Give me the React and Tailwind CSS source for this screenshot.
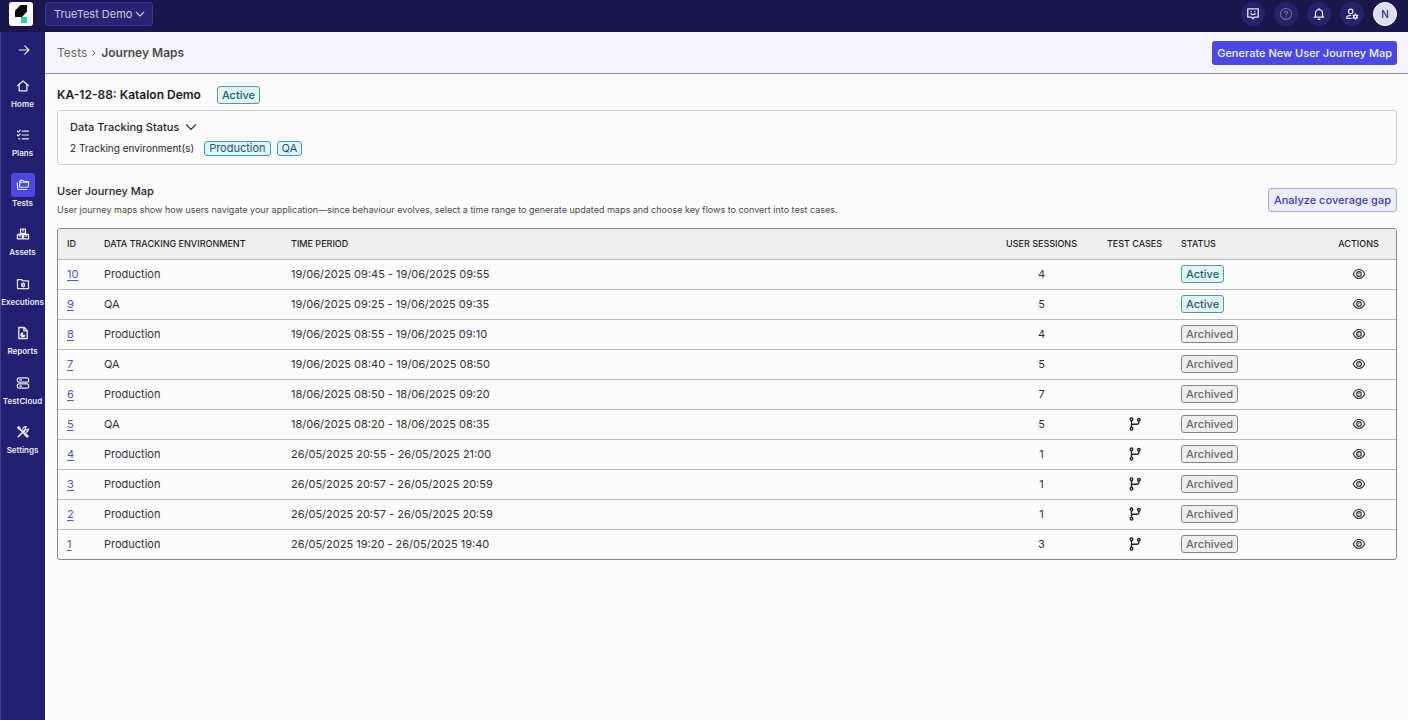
import React from "react";

const Svg = ({ size = "size-[14px]", children, sw = 1.5 }) => (
  <svg viewBox="0 0 16 16" className={size} fill="none" stroke="currentColor" strokeWidth={sw} strokeLinecap="round" strokeLinejoin="round" aria-hidden="true">
    {children}
  </svg>
);

const HomeIcon = () => (
  <Svg sw={1.5}>
    <path d="M2 7.500 8 2.300l6 5.200M3.600 6.400v7.200h8.800V6.400" />
  </Svg>
);
const PlansIcon = () => (
  <Svg sw={1.4}>
    <path d="M7 3.600h7.200M7 8h7.200M7 12.400h7.200M1.600 3.600l1.100 1.100 2-2.300M1.600 8l1.100 1.100 2-2.300M3 12.400h1.400" />
  </Svg>
);
const TestsIcon = () => (
  <Svg sw={1.3}>
    <path d="M4 9.300 4.500 3.600c0-.5.400-.9.900-.9h2.400l1.300 1.400h4.400c.5 0 .9.400.9.900l-.4 4.700c0 .5-.4.900-.9.900H4.900c-.5 0-.9-.4-.9-.9zM4.400 6.200l.2-.7c.1-.4.400-.6.800-.6h8.800" />
    <path d="M1.500 5.600 1.900 12c0 .7.600 1.200 1.300 1.200h9" />
  </Svg>
);
const AssetsIcon = () => (
  <Svg sw={1.5}>
    <path d="M5.200 2.400h5.600v5H5.200zM1.700 8.600h5.600v5H1.700zM8.700 8.600h5.600v5H8.700zM8 2.400v2.200M4.500 8.600v2.200M11.500 8.600v2.200" />
  </Svg>
);
const ExecutionsIcon = () => (
  <Svg sw={1.4}>
    <path d="M1.700 2.900h4.600l1.500 1.600h6.500v8.900H1.700z" />
    <circle cx="8.200" cy="9" r="1.500" />
    <path d="M8.200 6.700v.6M8.200 10.700v.6M6.200 7.800l.5.300M9.700 9.900l.5.300M6.200 10.200l.5-.3M9.700 8.100l.5-.3" />
  </Svg>
);
const ReportsIcon = () => (
  <Svg sw={1.5}>
    <path d="M3.200 1.700h6.100l3.500 3.500v9.100H3.200zM9 1.700v3.800h3.800" />
    <path d="M7.800 7.500v2.700h2.700A2.700 2.700 0 1 1 7.800 7.500z" fill="currentColor" strokeWidth="0.500" />
  </Svg>
);
const CloudIcon = () => (
  <Svg sw={1.4}>
    <rect x="1.500" y="2.200" width="13" height="4.700" rx="1.800" />
    <rect x="1.500" y="9.100" width="13" height="4.700" rx="1.800" />
    <path d="M4.200 4.500h2.200M4.200 11.500h2.200" />
  </Svg>
);
const SettingsIcon = () => (
  <Svg sw={1.8}>
    <path d="M2.500 13.500 7 9M9 7l1.700-1.700M3 3.300l5 5 5.200 5.200" />
    <path d="M14.200 4.200 12.200 6l-2.100-2.100 1.800-2a3.300 3.300 0 0 0-4 4.200l2 2a3.300 3.300 0 0 0 4.300-3.900z" strokeWidth="1.200" />
    <path d="M1.700 2.500l1.400-.9 2.200 2-1.600 1.500zM9.900 10.900l1.300-1.300 3 3-1.400 1.400z" fill="currentColor" strokeWidth="1" />
  </Svg>
);
const ChevronDown = ({ size }) => (
  <Svg size={size} sw={1.700}>
    <path d="M2 5.200 8 11.200l6-6" />
  </Svg>
);
const EyeIcon = () => (
  <Svg sw={1.3}>
    <path d="M1.500 8C3 4.600 5.300 2.900 8 2.900S13 4.600 14.500 8C13 11.400 10.700 13.100 8 13.100S3 11.400 1.500 8z" />
    <circle cx="8" cy="8" r="2.700" />
    <path d="M7 8.300c0-.8.500-1.300 1.200-1.300" strokeWidth="0.900" />
  </Svg>
);
const BranchIcon = () => (
  <Svg sw={1.600}>
    <circle cx="4" cy="2.700" r="1.500" />
    <circle cx="4" cy="13.300" r="1.500" />
    <circle cx="12.400" cy="3.200" r="1.500" />
    <path d="M4 4.200v7.600M12.400 4.700v1.600c0 1.300-.7 2-1.900 2H5.700C4.700 8.300 4 8.900 4 9.900" />
  </Svg>
);

const NAV = [
  ["Home", HomeIcon],
  ["Plans", PlansIcon],
  ["Tests", TestsIcon],
  ["Assets", AssetsIcon],
  ["Executions", ExecutionsIcon],
  ["Reports", ReportsIcon],
  ["TestCloud", CloudIcon],
  ["Settings", SettingsIcon],
];

const ROWS = [
  [10, "Production", "19/06/2025 09:45 - 19/06/2025 09:55", 4, false, "Active"],
  [9, "QA", "19/06/2025 09:25 - 19/06/2025 09:35", 5, false, "Active"],
  [8, "Production", "19/06/2025 08:55 - 19/06/2025 09:10", 4, false, "Archived"],
  [7, "QA", "19/06/2025 08:40 - 19/06/2025 08:50", 5, false, "Archived"],
  [6, "Production", "18/06/2025 08:50 - 18/06/2025 09:20", 7, false, "Archived"],
  [5, "QA", "18/06/2025 08:20 - 18/06/2025 08:35", 5, true, "Archived"],
  [4, "Production", "26/05/2025 20:55 - 26/05/2025 21:00", 1, true, "Archived"],
  [3, "Production", "26/05/2025 20:57 - 26/05/2025 20:59", 1, true, "Archived"],
  [2, "Production", "26/05/2025 20:57 - 26/05/2025 20:59", 1, true, "Archived"],
  [1, "Production", "26/05/2025 19:20 - 26/05/2025 19:40", 3, true, "Archived"],
];

const TONES = {
  Active: "border-[#4d9b9b] bg-[#e2f4f3] text-[#1f6163]",
  Archived: "border-[#858585] bg-[#eeeeee] text-[#6a6a6a]",
};

const StatusBadge = ({ status }) => (
  <span className={`inline-flex h-[18px] items-center rounded-[3px] border px-1 text-[11px] font-medium ${TONES[status]}`}>{status}</span>
);

const EnvBadge = ({ children }) => (
  <span className="inline-flex h-[15px] items-center rounded-[3px] border border-[#4593b8] bg-[#e0f5fb] px-1 text-[11px] text-[#20566f]">{children}</span>
);

const RoundButton = ({ label, muted, children }) => (
  <button aria-label={label} className={`flex size-6 items-center justify-center rounded-full bg-[#25226a] ${muted ? "text-[#77759c]" : "text-[#e6e6f4]"}`}>
    {children}
  </button>
);

function TopBar() {
  return (
    <header className="flex h-8 shrink-0 items-center bg-[#18164a] pr-[11px] pb-1 pl-[9px]">
      <a href="#home" aria-label="Home" className="flex size-6 items-center justify-center rounded-[3px] bg-white">
        <svg viewBox="0 0 24 24" className="size-6" aria-hidden="true">
          <path d="M6 8.500 11.500 3H18v6.500L13 15H6z" fill="#0b0b0b" />
          <path d="M12 15h6v6h-6z" fill="#35cf9c" />
        </svg>
      </a>
      <button className="ml-3 flex h-6 items-center gap-[3px] rounded-[3px] border border-[#3632a0] bg-[#272473] pr-[7px] pl-2 text-[11px] text-[#c9c8e2]">
        TrueTest Demo
        <ChevronDown size="size-[10px]" />
      </button>
      <div className="ml-auto flex items-center gap-[9px]">
        <RoundButton label="Feedback">
          <Svg sw={1.500}>
            <path d="M2 2.200h12v9.300H9.600L8 13.600l-1.600-2.100H2z" />
            <path d="M5.800 5v.3M10.200 5v.3M5.500 7.600c1.200 1.600 3.800 1.600 5 0" />
          </Svg>
        </RoundButton>
        <RoundButton label="Help" muted>
          <Svg sw={1.200}>
            <circle cx="8" cy="8" r="6.300" />
            <path d="M6.200 6.300C6.200 5.200 7 4.600 8 4.600s1.800.7 1.800 1.600C9.800 7.500 8 7.600 8 9M8 11.200v.2" />
          </Svg>
        </RoundButton>
        <RoundButton label="Notifications">
          <Svg sw={1.500}>
            <path d="M2.500 11.500h11M4 11.500V7a4 4 0 0 1 8 0v4.500M8 2v1M7 14h2" />
          </Svg>
        </RoundButton>
        <RoundButton label="Account management">
          <Svg sw={1.400}>
            <circle cx="6.500" cy="5" r="2.500" />
            <path d="M7 13H2v-.8c0-1.700 2-2.700 4.500-2.700" />
            <circle cx="11.800" cy="11" r="1.800" strokeWidth="1.800" />
            <path d="M11.800 8.300v-.4M11.800 14.100v-.4M9.500 9.700l-.4-.3M14.500 12.600l-.4-.3M9.500 12.300l-.4.300M14.500 9.400l-.4.300" />
          </Svg>
        </RoundButton>
        <button aria-label="Profile" className="flex size-6 items-center justify-center rounded-full border border-white bg-[#dddeef] text-[10px] font-medium text-[#34345c]">N</button>
      </div>
    </header>
  );
}

function Sidebar() {
  return (
    <nav className="flex w-[45px] shrink-0 flex-col border-l border-[#3f3d86] bg-[#221f70] pt-[10px] pr-px text-[#e9e9f5]">
      <button aria-label="Expand menu" className="ml-[15px] flex size-4 items-center justify-center">
        <Svg size="size-3" sw={1.600}>
          <path d="M1.500 8h13M9 2.500 14.500 8 9 13.500" />
        </Svg>
      </button>
      <ul className="mt-4 flex h-[382px] flex-col justify-between">
        {NAV.map(([label, Icon]) => (
          <li key={label}>
            <a href={`#${label.toLowerCase()}`} className="flex flex-col items-center">
              <span className={`flex size-6 items-center justify-center rounded-[3px] ${label === "Tests" ? "bg-[#4b48e0]" : ""}`}>
                <Icon />
              </span>
              <span className="text-[8px] leading-[12px] font-semibold">{label}</span>
            </a>
          </li>
        ))}
      </ul>
    </nav>
  );
}

function JourneyTable() {
  const th = "px-[9px] font-medium";
  return (
    <div className="mt-[11px] overflow-hidden rounded-[3px] border border-[#858585]">
      <table className="w-full table-fixed border-collapse text-left text-[11px] text-[#303038]">
        <colgroup>
          <col className="w-[37px]" />
          <col className="w-[187px]" />
          <col />
          <col className="w-[111px]" />
          <col className="w-[75px]" />
          <col className="w-[149px]" />
          <col className="w-[75px]" />
        </colgroup>
        <thead>
          <tr className="h-[30px] bg-[#efefef] text-[9px] whitespace-nowrap text-[#1d1d1f] uppercase">
            <th className={th}>ID</th>
            <th className={th}>Data Tracking Environment</th>
            <th className={th}>Time Period</th>
            <th className={`${th} text-center`}>User Sessions</th>
            <th className={`${th} text-center`}>Test Cases</th>
            <th className={th}>Status</th>
            <th className={`${th} text-center`}>Actions</th>
          </tr>
        </thead>
        <tbody>
          {ROWS.map(([id, env, period, sessions, cases, status]) => (
            <tr key={id} className="h-[30px] border-t border-[#b9b9b9]">
              <td className="px-[9px]">
                <a href={`#map-${id}`} className="text-[#4f55c4] underline underline-offset-2">{id}</a>
              </td>
              <td className="px-[9px]">{env}</td>
              <td className="px-[9px] whitespace-nowrap">{period}</td>
              <td className="px-[9px] text-center">{sessions}</td>
              <td className="px-[9px]">
                {cases && (
                  <span className="flex justify-center text-[#252528]">
                    <BranchIcon />
                  </span>
                )}
              </td>
              <td className="px-[9px]">
                <span className="flex">
                  <StatusBadge status={status} />
                </span>
              </td>
              <td className="px-[9px]">
                <button aria-label={`View map ${id}`} className="mx-auto flex text-[#303033]">
                  <EyeIcon />
                </button>
              </td>
            </tr>
          ))}
        </tbody>
      </table>
    </div>
  );
}

export default function App() {
  return (
    <div className="flex min-h-screen flex-col bg-[#fcfcfc] font-['Inter',sans-serif] text-[#252528]">
      <TopBar />
      <div className="flex grow">
        <Sidebar />
        <div className="flex min-w-0 grow flex-col">
          <div className="flex h-[42px] items-center justify-between border-b border-[#8c8c90] bg-[#f6f5fc] pt-px pr-[11px] pl-3">
            <div className="flex items-center gap-[3px] text-[12px] text-[#66666a]">
              <a href="#tests">Tests</a>
              <Svg size="size-2" sw={2}>
                <path d="M5 3l5 5-5 5" />
              </Svg>
              <span className="font-semibold text-[#4b4b50]">Journey Maps</span>
            </div>
            <button className="h-6 rounded-[3px] bg-[#4b48e0] px-[5px] text-[11px] font-medium text-[#f1f1fd]">Generate New User Journey Map</button>
          </div>
          <main className="pt-3 pr-[11px] pl-3">
            <div className="flex items-center gap-4">
              <h1 className="text-[12px] leading-[18px] font-semibold text-[#1b1b1e]">KA-12-88: Katalon Demo</h1>
              <StatusBadge status="Active" />
            </div>
            <section className="mt-[6px] flex h-[55px] flex-col justify-center gap-[5px] rounded-[3px] border border-[#cfcfcf] px-3">
              <button className="flex items-center gap-[6px] text-[11px] leading-4 font-medium">
                Data Tracking Status
                <ChevronDown size="size-3" />
              </button>
              <div className="flex items-center gap-[10px]">
                <span className="text-[10px] leading-4">2 Tracking environment(s)</span>
                <div className="flex items-center gap-[6px]">
                  <EnvBadge>Production</EnvBadge>
                  <EnvBadge>QA</EnvBadge>
                </div>
              </div>
            </section>
            <div className="mt-[18px] flex items-center justify-between">
              <div>
                <h2 className="text-[11px] leading-4 font-medium">User Journey Map</h2>
                <p className="mt-1 text-[9px] leading-[14px] text-[#48484c]">
                  User journey maps show how users navigate your application—since behaviour evolves, select a time range to generate updated maps and choose key flows to convert into test cases.
                </p>
              </div>
              <button className="h-6 shrink-0 rounded-[3px] border border-[#a9a9ee] bg-[#ecedfb] px-[5px] text-[11px] font-medium text-[#403db0]">Analyze coverage gap</button>
            </div>
            <JourneyTable />
          </main>
        </div>
      </div>
    </div>
  );
}
